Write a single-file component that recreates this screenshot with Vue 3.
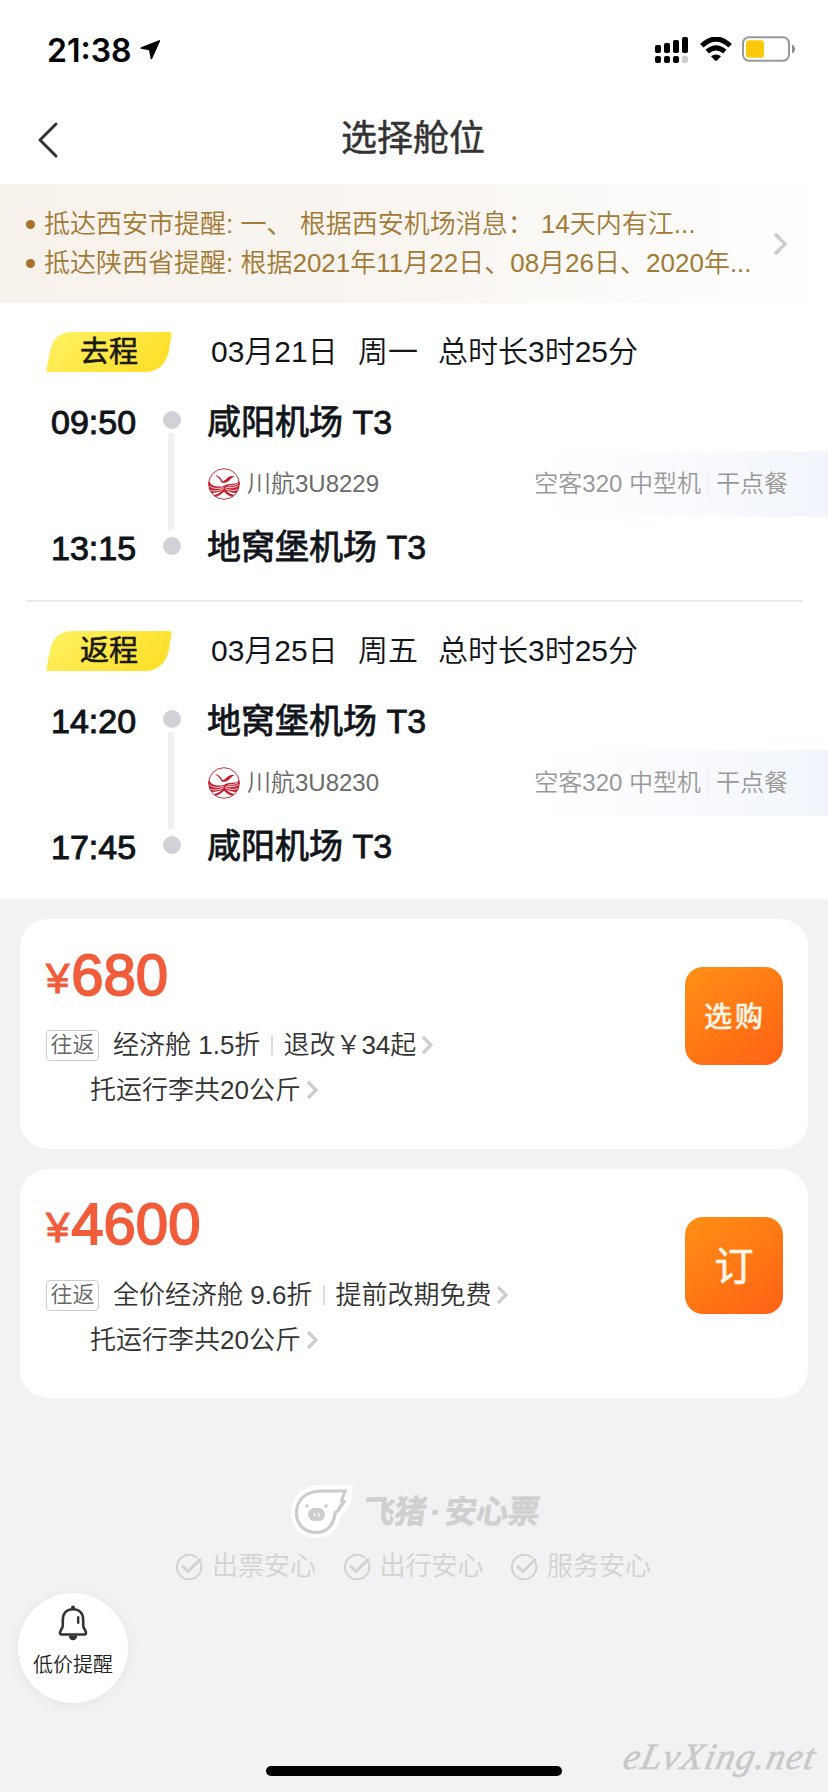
<script setup>
const notices = [
  '抵达西安市提醒: 一、 根据西安机场消息： 14天内有江...',
  '抵达陕西省提醒: 根据2021年11月22日、08月26日、2020年...',
]

const legs = [
  {
    label: '去程', date: '03月21日', day: '周一', duration: '总时长3时25分',
    depart: '09:50', from: '咸阳机场 T3', arrive: '13:15', to: '地窝堡机场 T3',
    flight: '川航3U8229', plane: '空客320 中型机', meal: '干点餐',
  },
  {
    label: '返程', date: '03月25日', day: '周五', duration: '总时长3时25分',
    depart: '14:20', from: '地窝堡机场 T3', arrive: '17:45', to: '咸阳机场 T3',
    flight: '川航3U8230', plane: '空客320 中型机', meal: '干点餐',
  },
]

const fares = [
  { price: '680', cabin: '经济舱 1.5折', rule: '退改￥34起', baggage: '托运行李共20公斤', action: '选购' },
  { price: '4600', cabin: '全价经济舱 9.6折', rule: '提前改期免费', baggage: '托运行李共20公斤', action: '订' },
]

const promises = ['出票安心', '出行安心', '服务安心']
</script>

<template>
  <div class="page">
    <header class="status">
      <span class="clock">21:38</span>
      <svg class="locate" width="22" height="22" viewBox="0 0 22 22"><path d="M20 1.2 2 8.2Q0.6 9.2 2 9.8L10 11.2 11.600 19.600Q12.300 21 13.300 19.600L21 2.200Q21.200 0.800 20 1.200Z" /></svg>
      <svg class="signal" width="34" height="27" viewBox="0 0 34 27">
        <rect x="0" y="8" width="6" height="8" rx="1.800" /><rect x="9" y="6" width="6" height="10" rx="1.800" />
        <rect x="18" y="3" width="6" height="13" rx="1.800" /><rect x="27" y="0" width="6" height="16" rx="1.800" />
        <rect x="0" y="19" width="6" height="7" rx="2" /><rect x="9" y="19" width="6" height="7" rx="2" />
        <rect x="18" y="19" width="6" height="7" rx="2" /><rect class="dim" x="27" y="19" width="6" height="7" rx="2" />
      </svg>
      <svg class="wifi" width="32" height="25" viewBox="0 0 32 25">
        <path class="arc" d="M1.800 8.800Q16-4.600 30.200 8.800" /><path class="arc" d="M7.200 14.600Q16 7 24.800 14.600" />
        <path d="M11 19.200Q16 15.600 21 19.200L17 23.400Q16 24.300 15 23.400Z" />
      </svg>
      <svg class="battery" width="54" height="26" viewBox="0 0 54 26">
        <rect class="shell" x="1" y="1.200" width="46" height="23.600" rx="6" />
        <rect class="charge" x="4" y="4.300" width="18" height="17.400" rx="3" />
        <path class="cap" d="M50 8.500Q53 10 53 13T50 17.500Z" />
      </svg>
    </header>

    <nav class="nav">
      <svg class="back" width="22" height="38" viewBox="0 0 22 38"><path d="M19 3 3 19 19 35" /></svg>
      <h1>选择舱位</h1>
    </nav>

    <section class="notice">
      <ul>
        <li v-for="n in notices" :key="n"><i></i>{{ n }}</li>
      </ul>
      <svg width="16" height="24" viewBox="0 0 16 24"><path d="M3 2 13 12 3 22" /></svg>
    </section>

    <main>
      <section v-for="leg in legs" :key="leg.label" class="leg">
        <div class="leg-head">
          <div class="badge">
            <svg width="126" height="40" viewBox="0 0 126 40">
              <defs>
                <linearGradient id="yellow" x1="0" y1="0" x2="1" y2="0.400">
                  <stop offset="0" stop-color="#fff266" /><stop offset="1" stop-color="#ffe02c" />
                </linearGradient>
              </defs>
              <path fill="url(#yellow)" d="M2 40Q0 40 .4 37.500L4.500 17Q9 0 27 0H123Q126 0 125.500 3L122.500 21Q117 40 99 40Z" />
            </svg>
            <span>{{ leg.label }}</span>
          </div>
          <span class="date">{{ leg.date }}</span>
          <span class="day">{{ leg.day }}</span>
          <span class="duration">{{ leg.duration }}</span>
        </div>
        <div class="route">
          <div class="times">
            <time>{{ leg.depart }}</time>
            <time>{{ leg.arrive }}</time>
          </div>
          <div class="track"><i class="dot"></i><i class="line"></i><i class="dot"></i></div>
          <div class="stops">
            <div class="stop">{{ leg.from }}</div>
            <div class="flight">
              <svg class="airline" width="32" height="32" viewBox="0 0 32 32">
                <circle class="ring" cx="16" cy="16" r="15.300" />
                <path class="red" d="M7 7.300C10 7.400 12.500 9 14.500 13.200 16 12.700 18 11.600 19.500 9.800 21.500 7.800 24 7.600 26.500 8.200 23 9.500 21.800 12.800 18.500 14.200 16.500 15 14.600 14.800 13.300 14.200 12.400 11.400 10 9 7 7.300Z" />
                <path class="red" d="M.7 13C4 18.500 8 18.500 13.500 18.600 16 18.600 17 16.600 20 16.200 25 15.800 29 16 31.300 13A15.300 15.300 0 0 1 28.500 25C24 25 20.500 23.500 18 22.300 21 25.500 24 26.500 26.500 27.300L24.500 29C20.500 28 18 26 16 23.800 14 26 11 28 7.500 29L5.500 27.300C9 26.500 12 25 14.500 22.300 11 24.200 7 25.200 3.500 25A15.300 15.300 0 0 1 .7 13Z" />
                <path class="wave" d="M1.500 18C6 21.300 10 20.500 15.500 19.700M2.500 22C7 24 11 22.500 15.500 20.800M17.500 19.200C22 20.300 27 20 30.500 17.500M17 20.700C22 22.700 26 23.200 29.800 21.500M20 18Q26 18.500 30 15.500" />
              </svg>
              <span class="code">{{ leg.flight }}</span>
              <div class="aircraft">
                <span>{{ leg.plane }}</span><i></i><span>{{ leg.meal }}</span>
              </div>
            </div>
            <div class="stop last">{{ leg.to }}</div>
          </div>
        </div>
      </section>
    </main>

    <section class="fares">
      <article v-for="fare in fares" :key="fare.price" class="fare">
        <div class="info">
          <div class="price"><small>¥</small>{{ fare.price }}</div>
          <div class="row">
            <span class="tag">往返</span>
            <span>{{ fare.cabin }}</span>
            <i class="sep"></i>
            <span>{{ fare.rule }}</span>
            <svg class="more" width="12" height="20" viewBox="0 0 12 20"><path d="M2 2 10 10 2 18" /></svg>
          </div>
          <div class="row baggage">
            <span>{{ fare.baggage }}</span>
            <svg class="more" width="12" height="20" viewBox="0 0 12 20"><path d="M2 2 10 10 2 18" /></svg>
          </div>
        </div>
        <button :class="{ single: fare.action.length === 1 }">{{ fare.action }}</button>
      </article>
    </section>

    <footer class="assurance">
      <div class="brand">
        <svg width="66" height="56" viewBox="0 0 66 56">
          <path class="halo" d="M1 29C1 12 13 2 29 1H63L61 18 55 27 51 32C49 46 39 54 26 54 12 54 1 44 1 29Z" />
          <path class="outline" d="M6.500 29C6.500 15 16 8 30 7H55L51.500 17 54 17.500 48 26.500 45 29C44 41 37 48.500 26 48.500 15 48.500 6.500 41 6.500 29Z" />
          <rect class="snout" x="18" y="24" width="17" height="13" rx="6.500" />
          <circle class="eye" cx="17" cy="22" r="1.800" /><circle class="eye" cx="36" cy="22" r="1.800" />
          <path class="nostril" d="M24.500 29.500v2.500M28.700 29.500v2.500" />
        </svg>
        <span class="wordmark">飞猪<b>·</b>安心票</span>
      </div>
      <ul class="promises">
        <li v-for="p in promises" :key="p">
          <svg width="28" height="28" viewBox="0 0 28 28">
            <path d="M25.200 9A12.200 12.200 0 1 1 21.500 4.400" /><path class="tick" d="M8 13.500 13 18.700 25 6.500" />
          </svg>{{ p }}
        </li>
      </ul>
    </footer>

    <button class="alert">
      <svg width="30" height="36" viewBox="0 0 30 36">
        <path class="body" d="M4.800 15C4.800 8 9 4.200 15 4.200S25.200 8 25.200 15V20.500C25.200 23.500 28 25 28 28 28 29 27.500 29.500 26.500 29.500H3.500C2.500 29.500 2 29 2 28 2 25 4.800 23.500 4.800 20.500Z" />
        <path class="fill" d="M10.800 30.500H19.200Q18.800 35.300 15 35.300T10.800 30.500Z" /><circle class="fill" cx="15" cy="2.600" r="2" />
        <path class="shine" d="M20.200 12.300v5.500" />
      </svg>
      <span>低价提醒</span>
    </button>
    <div class="home"></div>
    <div class="mark">eLvXing.net</div>
  </div>
</template>

<style>
body { background: #f1f2f4; }
</style>

<style scoped>
* { box-sizing: border-box; }
.page {
  position: relative; width: 828px; height: 1792px; overflow: hidden; background: #f1f2f4;
  font-family: "Liberation Sans", "Noto Sans CJK SC", sans-serif; font-weight: 350; color: #11151a; white-space: nowrap;
}
svg { display: block; flex: none; }
ul { list-style: none; margin: 0; padding: 0; }
button { border: 0; padding: 0; font-family: inherit; font-weight: inherit; }

.status { display: flex; align-items: center; height: 92px; padding: 6px 32px 0 47px; background: #fff; }
.clock { width: 92px; font: 600 32px/40px Inter, sans-serif; color: #000; padding-top: 3px; }
.locate { margin-top: 2px; }
.signal { margin: 2px 11px 0 auto; }
.signal .dim { fill: #ccc; }
.wifi { margin-right: 10px; }
.wifi .arc { fill: none; stroke: #000; stroke-width: 5; }
.shell { fill: none; stroke: #999; stroke-width: 2; }
.charge { fill: #fdc90a; }
.cap { fill: #8e8e8e; }

.nav { display: grid; grid-template-columns: 56px 1fr 93px; align-items: center; height: 92px; padding-left: 37px; background: #fff; }
.back path { fill: none; stroke: #333; stroke-width: 3; stroke-linecap: round; stroke-linejoin: round; }
.nav svg { margin-top: 4px; }
.nav h1 { margin: 2px 0 0 -2px; font-size: 36px; line-height: 50px; font-weight: 400; text-align: center; color: #333; -webkit-text-stroke: .5px #333; }

.notice { display: flex; align-items: center; justify-content: space-between; height: 119px; padding: 0 40px 0 26px; background: linear-gradient(90deg, #f7f2ec, #f8f4ef 40%, #fff); }
.notice li { display: flex; align-items: center; height: 39px; font-size: 26px; line-height: 39px; color: #a27a35; }
.notice li i { width: 9px; height: 9px; margin-right: 9px; border-radius: 50%; background: #a9722b; }
.notice path { fill: none; stroke: #ccc; stroke-width: 3.500; }
.notice svg { margin-top: 1px; }

.leg { height: 297px; padding-top: 29px; background: #fff; }
.leg + .leg { position: relative; height: 299px; padding-top: 31px; }
.leg + .leg::before { content: ""; position: absolute; top: 0; left: 26px; right: 26px; height: 2px; background: #e9e9ea; }
.leg-head { display: flex; height: 40px; padding-left: 46px; line-height: 40px; font-size: 30px; }
.badge { display: grid; width: 126px; margin-right: 39px; }
.badge > * { grid-area: 1 / 1; }
.badge span { padding-left: 34px; font-size: 29px; font-weight: 400; color: #1a1a10; -webkit-text-stroke: .6px #1a1a10; z-index: 1; }
.date { width: 147px; }
.day { width: 80px; }
.route { display: flex; height: 184px; margin-top: 21px; }
.times { width: 163px; padding-left: 51px; font-size: 34px; -webkit-text-stroke: 1px #11151a; }
.times time { display: block; line-height: 58px; height: 58px; }
.times time + time { margin-top: 68px; }
.track { display: flex; flex-direction: column; align-items: center; width: 18px; padding-top: 18px; margin-right: 26px; }
.dot { width: 18px; height: 18px; border-radius: 50%; background: #d1d1d8; }
.line { width: 6px; height: 97px; margin: 4px 2px 7px 0; background: #f1f1f3; }
.stops { flex: 1; }
.stop { height: 58px; line-height: 58px; font-size: 34px; font-weight: 400; -webkit-text-stroke: .8px #11151a; }
.stop.last { line-height: 61px; }
.flight { display: flex; align-items: center; height: 66px; font-size: 24px; }
.airline { margin: -1px 7px 0 1px; }
.airline .ring { fill: #fff; stroke: #c0323c; stroke-width: 1; }
.airline .red { fill: #c41f30; }
.airline .wave { fill: none; stroke: #fff; stroke-width: .8; }
.code { color: #6a6a6a; line-height: 66px; height: 66px; }
.aircraft { display: flex; align-items: center; justify-content: flex-end; flex: 1; height: 66px; line-height: 66px; padding-right: 40px; margin-left: 60px; color: #999; background: linear-gradient(90deg, rgba(239, 244, 252, 0) 25%, #fafbfe 60%, #f1f5fb); }
.aircraft i { width: 1px; height: 30px; margin: 0 7px; background: #e9ecf0; }

.fares { display: grid; gap: 20px; padding: 20px 20px 0; }
.fare { display: flex; justify-content: space-between; height: 230px; padding: 20px 26px 0 26px; border-radius: 28px; background: #fff; }
.fare + .fare { height: 229px; }
.price { height: 70px; line-height: 72px; font-size: 58px; color: #f15c3b; -webkit-text-stroke: 1.800px #f15c3b; }
.price small { position: relative; top: -2px; font-size: 42px; margin-right: 2px; -webkit-text-stroke-width: 1px; }
.fare + .fare .price { line-height: 70px; }
.row { display: flex; align-items: center; height: 44px; line-height: 44px; font-size: 26px; color: #333; }
.price + .row { margin-top: 14px; }
.tag { width: 53px; height: 31px; margin-right: 14px; border: 1.500px solid #ccc; border-radius: 4px; font-size: 22px; line-height: 28px; text-align: center; color: #666; }
.sep { width: 2px; height: 20px; margin: 0 10px 0 11px; background: #ddd; }
.more { margin-left: 5px; }
.more path { fill: none; stroke: #ccc; stroke-width: 3.200; }
.baggage { padding: 1px 0 0 44px; }
.fare button { width: 98px; height: 98px; margin: 28px -1px 0 0; padding-bottom: 2px; border-radius: 18px; background: linear-gradient(145deg, #ff9015, #ff6115); color: #fff8e8; font-size: 28px; letter-spacing: 3px; text-indent: 2px; font-weight: 400; -webkit-text-stroke: .7px #fff8e8; }
.fare button.single { height: 97px; font-size: 39px; letter-spacing: 0; text-indent: 0; padding-bottom: 5px; }

.assurance { padding-top: 86px; }
.brand { display: flex; padding-left: 290px; height: 56px; }
.halo { fill: #fff; }
.outline { fill: none; stroke: #ccc; stroke-width: 3.200; }
.snout, .eye { fill: #ccc; }
.nostril { stroke: #fff; stroke-width: 1.600; stroke-linecap: round; }
.wordmark { margin-left: 7px; font-size: 32px; line-height: 57px; font-weight: 700; color: #cfcfcf; transform: skewX(-8deg); letter-spacing: -.5px; -webkit-text-stroke: .5px #cfcfcf; }
.wordmark b { display: inline-block; width: 19px; text-align: center; }
.promises { display: flex; gap: 26px; height: 44px; margin-top: 4px; padding-left: 175px; }
.promises li { display: flex; align-items: center; width: 141.500px; font-size: 26px; line-height: 46px; color: #d0d4cf; }
.promises svg { margin-right: 9px; margin-top: 1px; }
.promises path { fill: none; stroke: #d0d4cf; stroke-width: 2; stroke-linecap: round; }
.promises .tick { stroke-width: 3; }

.alert { position: absolute; left: 18px; top: 1593px; width: 110px; height: 110px; border-radius: 50%; background: #fff; box-shadow: 0 2px 14px rgba(0, 0, 0, .06); display: flex; flex-direction: column; align-items: center; padding-top: 12px; font-size: 20px; line-height: 26px; color: #222; }
.alert span { margin-top: 11px; }
.alert .body { fill: none; stroke: #333; stroke-width: 2.600; }
.alert .fill { fill: #333; }
.alert .shine { stroke: #333; stroke-width: 2.400; stroke-linecap: round; }
.home { position: absolute; left: 266px; top: 1766px; width: 296px; height: 10px; border-radius: 5px; background: #000; }
.mark { position: absolute; left: 624px; top: 1734px; font: italic 37px/46px "Liberation Serif", serif; letter-spacing: 1.300px; color: #c8c8c8; -webkit-text-stroke: .5px #c8c8c8; transform: skewX(-12deg); }
</style>
